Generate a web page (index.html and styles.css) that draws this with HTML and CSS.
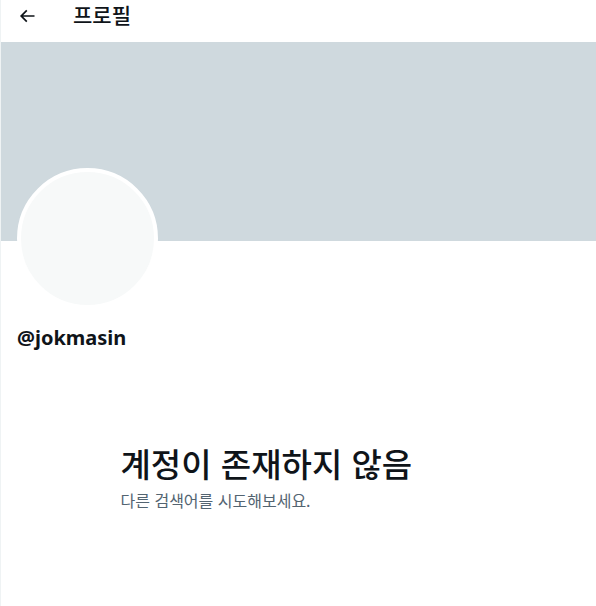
FILE: index.html
```html
<!DOCTYPE html>
<html lang="ko">
<head>
<meta charset="utf-8">
<meta name="viewport" content="width=device-width, initial-scale=1">
<title>프로필</title>
<link rel="stylesheet" href="styles.css">
</head>
<body>
<main class="column">
  <header class="topbar">
    <button class="back" type="button" aria-label="뒤로">
      <svg viewBox="0 0 24 24" aria-hidden="true"><path d="M7.414 13l5.043 5.04-1.414 1.42L3.586 12l7.457-7.46 1.414 1.42L7.414 11H21v2H7.414z"/></svg>
    </button>
    <h2 class="title">프로필</h2>
  </header>
  <div class="banner"></div>
  <section class="profile">
    <div class="avatar"></div>
    <p class="handle">@jokmasin</p>
  </section>
  <section class="empty">
    <h1 class="empty-title">계정이 존재하지 않음</h1>
    <p class="empty-text">다른 검색어를 시도해보세요.</p>
  </section>
</main>
</body>
</html>
```
FILE: styles.css
```css
* { box-sizing: border-box; }

body {
  margin: 0;
  background: #fff;
  color: #0f1419;
  font-family: "Noto Sans CJK KR", sans-serif;
}

h1, h2, p { margin: 0; }

.column {
  min-height: 100vh;
  border-left: 1px solid #eff3f4;
}

.topbar {
  display: flex;
  align-items: flex-start;
  gap: 36px;
  height: 42px;
  padding: 2px 16px 0;
}

.back {
  display: flex;
  align-items: center;
  height: 28px;
  padding: 0;
  border: 0;
  background: none;
  color: inherit;
}

.back svg {
  width: 20px;
  height: 20px;
  fill: currentColor;
}

.title {
  font-size: 21px;
  line-height: 24px;
  font-weight: 500;
}

.banner {
  height: 199px;
  background: #cfd9de;
}

.profile { padding: 0 16px; }

.avatar {
  width: 141px;
  height: 141px;
  margin-top: -73px;
  border: 4px solid #fff;
  border-radius: 50%;
  background: #f7f9f9;
}

.handle {
  margin-top: 17px;
  font-family: "Noto Sans", sans-serif;
  font-size: 20px;
  line-height: 24px;
  font-weight: 700;
}

.empty {
  width: 100%;
  max-width: 396px;
  margin: 95px auto 0;
  padding: 0 20px;
}

.empty-title {
  font-size: 33px;
  line-height: 36px;
  font-weight: 500;
}

.empty-text {
  margin-top: 9px;
  color: #536471;
  font-size: 16px;
  line-height: 20px;
}
```
